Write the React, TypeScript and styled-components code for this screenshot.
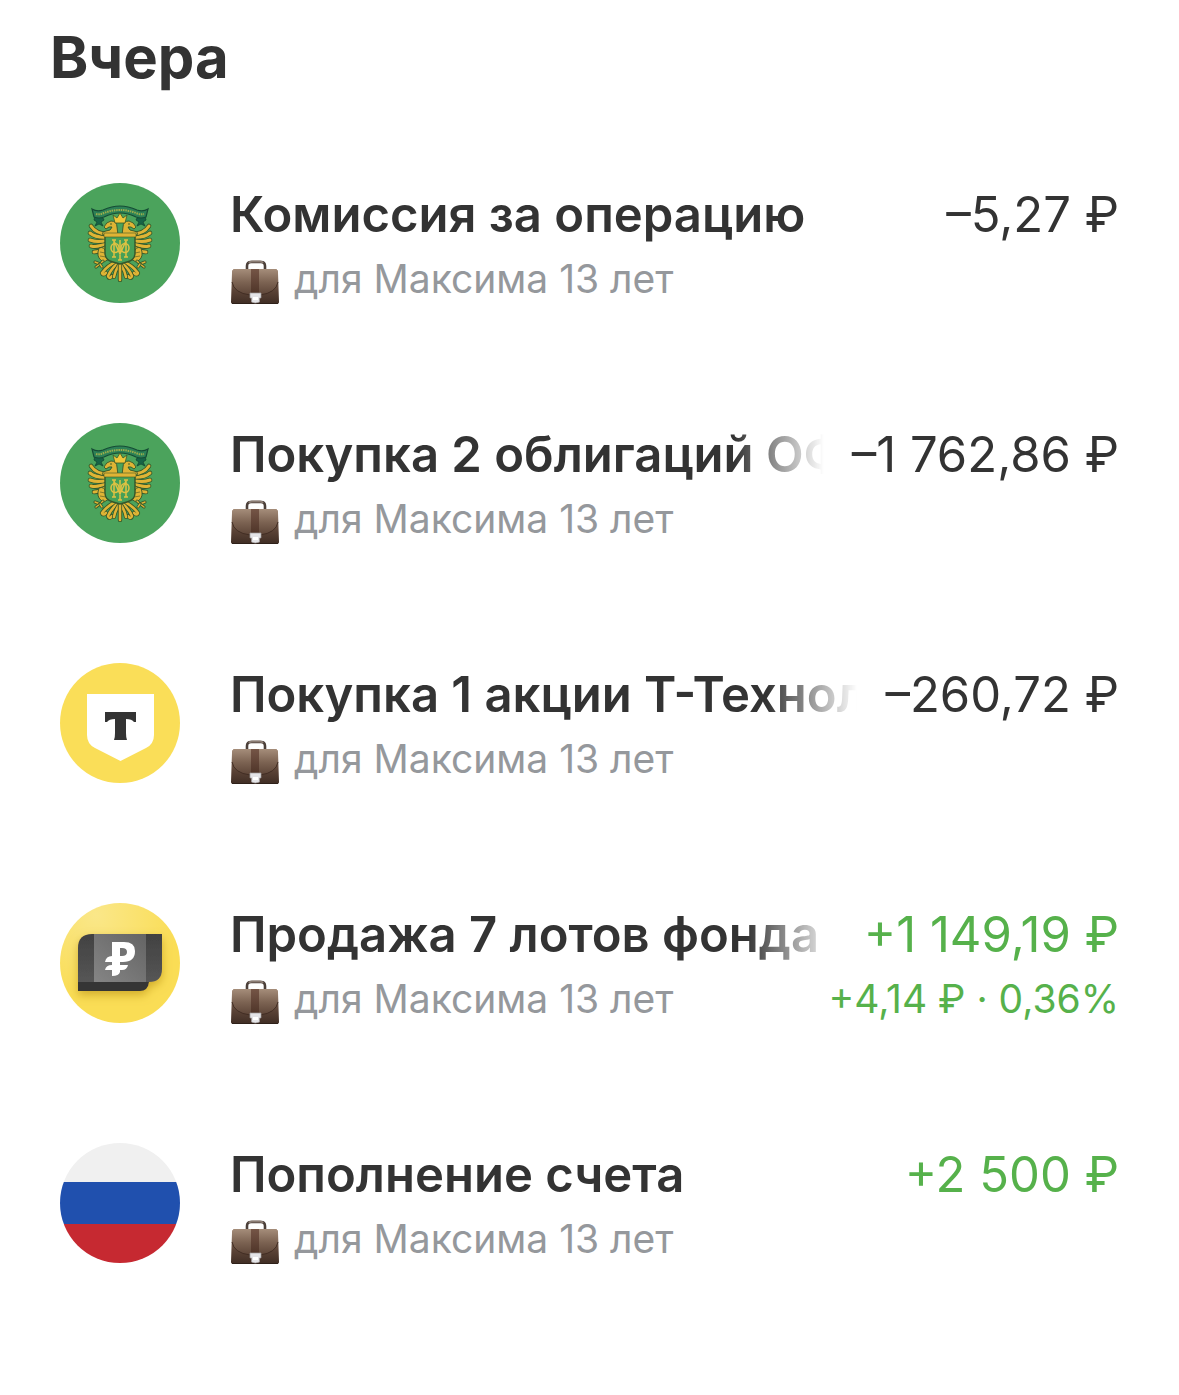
import React, { useId } from 'react';
import styled, { createGlobalStyle } from 'styled-components';

const GlobalStyle = createGlobalStyle`
  * { box-sizing: border-box; }
  body {
    margin: 0;
    background: #fff;
    color: #333;
    font-family: Inter, "Liberation Sans", sans-serif;
  }
`;

const Page = styled.main`
  padding: 23px 60px 60px;
`;

const DayTitle = styled.h1`
  margin: 0 0 32px -10px;
  font-size: 58px;
  line-height: 68px;
  font-weight: 700;
`;

const List = styled.ul`
  display: flex;
  flex-direction: column;
  margin: 0;
  padding: 0;
  list-style: none;
`;

const Row = styled.li`
  display: flex;
  align-items: center;
  gap: 50px;
  min-height: 240px;
`;

const Badge = styled.svg`
  display: block;
  flex: none;
  width: 120px;
  height: 120px;
`;

const Details = styled.div`
  flex: 1;
  min-width: 0;
  padding-top: 8px;
`;

const Line = styled.div`
  display: flex;
  align-items: center;
  justify-content: space-between;
  gap: 28px;
`;

const Title = styled.h2<{ $fade?: boolean }>`
  flex: 1 1 0;
  min-width: 0;
  margin: 0;
  overflow: hidden;
  white-space: nowrap;
  font-size: 49px;
  line-height: 64px;
  font-weight: 600;
  ${({ $fade }) => $fade && 'mask-image: linear-gradient(to left, transparent, #000 90px);'}
`;

const Amount = styled.span<{ $income?: boolean }>`
  flex: none;
  white-space: nowrap;
  font-size: 49px;
  line-height: 64px;
  color: ${({ $income }) => ($income ? '#56b14b' : '#333')};
`;

const Account = styled.span`
  display: flex;
  align-items: center;
  gap: 14px;
  font-size: 39px;
  line-height: 64px;
  color: #95989c;
`;

const Profit = styled.span`
  font-size: 39px;
  line-height: 64px;
  color: #56b14b;
`;

const CaseIcon = styled.svg`
  display: block;
  width: 50px;
  height: 46px;
  margin-top: 8px;
`;

function Briefcase() {
  const id = useId();
  return (
    <CaseIcon viewBox="0 0 50 46" aria-hidden="true">
      <defs>
        <linearGradient id={id + 'b'} x1="0" y1="0" x2="0" y2="1">
          <stop offset="0" stopColor="#9a7d69" />
          <stop offset="0.6" stopColor="#5c4437" />
          <stop offset="1" stopColor="#3f2d24" />
        </linearGradient>
        <linearGradient id={id + 'f'} x1="0" y1="0" x2="0" y2="1">
          <stop offset="0" stopColor="#a58d7a" />
          <stop offset="0.5" stopColor="#7d6453" />
          <stop offset="1" stopColor="#5c4437" />
        </linearGradient>
        <linearGradient id={id + 's'} x1="0" y1="0" x2="0" y2="1">
          <stop offset="0" stopColor="#755546" />
          <stop offset="1" stopColor="#4e3428" />
        </linearGradient>
      </defs>
      <path d="M17 9V6Q17 2 21 2H31Q35 2 35 6V9" fill="none" stroke="#4b3f39" strokeWidth="2.6" />
      <path d="M19 3Q20 1.500 22 1.500H30Q32 1.500 33 3" fill="none" stroke="#8b7d74" strokeWidth="2" />
      <path d="M5 9H45Q48 9 48 13L49 42Q49 44 46 44H4Q1 44 1 42L2 13Q2 9 5 9Z" fill={'url(#' + id + 'b)'} />
      <path d="M5 9H45Q48 9 48 13V22Q46 33 30 35H20Q4 33 2 22V13Q2 9 5 9Z" fill={'url(#' + id + 'f)'} />
      <path d="M2 22Q4 33 20 35H30Q46 33 48 22" fill="none" stroke="#412d23" strokeWidth="1" />
      <path d="M21 9H29V34H21Z" fill={'url(#' + id + 's)'} />
      <path d="M2 43.500H48" stroke="#2e2019" strokeWidth="1.2" />
      <path d="M20 33H31V38H29.500V42Q25 44 21.500 42V38H20Z" fill="#e4e4e7" stroke="#9f9b9b" strokeWidth="0.7" />
      <path d="M23 37H28V40H23Z" fill="#fff" />
    </CaseIcon>
  );
}

const feathers = [
  'M46 63Q40 69 34 69',
  'M46 60Q38 65 31 63',
  'M47 57Q38 60 30 57',
  'M47 54Q36 55 30 50',
  'M48 51Q36 51 31 43',
];

const plumes = ['M56 79Q48 82 42 90Q43 93 46 90', 'M57 81Q51 86 48 93Q49 97 52 93', 'M59 82Q55 88 54 94', 'M60 80V97'];

function Strands({ paths, width }: { paths: string[]; width: number }) {
  return (
    <g fill="none" strokeLinecap="round" strokeLinejoin="round">
      {paths.map((d) => (
        <g key={d}>
          <path d={d} stroke="#34562a" strokeWidth={width + 1.6} />
          <path d={d} stroke="#dfb435" strokeWidth={width} />
        </g>
      ))}
    </g>
  );
}

function EagleHalf() {
  return (
    <g>
      <path d="M35 33L43 35L44 37L41 39L43 43L39 41L35 43L37 39L34 37Z" fill="#176447" stroke="#124831" strokeWidth="0.8" />
      <Strands paths={feathers} width={3} />
      <path d="M58 52H43Q41 49 46 48Q51 48 52 44Q49 43 46 46L44 44Q46 39 51 38Q57 38 57 44Z" fill="#dfb435" stroke="#34562a" strokeWidth="0.9" />
      <circle cx="51" cy="41" r="0.8" fill="#34562a" />
      <path d="M39 65Q44 63 46 69L49 76L44 79Q37 76 38 69Z" fill="#dfb435" stroke="#34562a" strokeWidth="0.9" />
      <path d="M40 69L45 70M40 73L46 74" stroke="#6d6d28" strokeWidth="0.8" />
      <Strands paths={['M43 78L40 81', 'M40 81L35 79', 'M40 81L36 84', 'M40 81L42 84']} width={1.4} />
      <Strands paths={plumes} width={2.6} />
    </g>
  );
}

function EagleBadge() {
  return (
    <Badge viewBox="0 0 120 120" role="img" aria-label="ОФЗ">
      <circle cx="60" cy="60" r="60" fill="#4ba35c" />
      <EagleHalf />
      <g transform="translate(120 0) scale(-1 1)"><EagleHalf /></g>
      <path d="M32 26Q37 29 43 27Q52 23 60 23Q68 23 77 27Q83 29 88 26L86 34Q81 36 76 34Q68 30 60 30Q52 30 44 34Q39 36 34 34Z" fill="#2d8156" stroke="#164c35" strokeWidth="1.2" />
      <path d="M36 31Q40 32 44 30Q52 27 60 27Q68 27 76 30Q80 32 84 31" fill="none" stroke="#9cae4b" strokeWidth="2" strokeDasharray="1.500 0.800" />
      <path d="M55 40L53 32L57 35L60 30L63 35L67 32L65 40Z" fill="#efc63a" stroke="#3d5926" strokeWidth="0.8" />
      <path d="M45 52H75V70Q75 77 67 79L60 81L53 79Q45 77 45 70Z" fill="#46a057" stroke="#34562a" strokeWidth="1.4" />
      <path d="M44 50H76V54H44Z" fill="#dfb435" stroke="#425a25" strokeWidth="0.6" />
      <g fill="none" stroke="#dfc243" strokeWidth="1.5">
        <path d="M54 57V74M66 57V74M54 58L60 71L66 58M60 57V77M52 57H56M64 57H68M52 74H56M64 74H68M58 77H62" />
        <ellipse cx="55" cy="65" rx="4" ry="4.500" />
        <ellipse cx="65" cy="65" rx="4" ry="4.500" />
      </g>
    </Badge>
  );
}

function BankBadge() {
  return (
    <Badge viewBox="0 0 120 120" role="img" aria-label="Т-Технологии">
      <circle cx="60" cy="60" r="60" fill="#fade58" />
      <path d="M27 31H94V72Q94 81 86 85L60.500 98L35 85Q27 81 27 72Z" fill="#fff" />
      <path d="M45 49H76V59H74Q72 56 66 56V70Q66 75 67 77H54Q55 75 55 70V56Q49 56 47 59H45Z" fill="#333" />
    </Badge>
  );
}

function FundBadge() {
  return (
    <Badge viewBox="0 0 120 120" role="img" aria-label="Фонд">
      <defs>
        <radialGradient id="fundGold" cx="0.3" cy="0.1" r="0.7">
          <stop offset="0" stopColor="#fae789" />
          <stop offset="1" stopColor="#fadd55" />
        </radialGradient>
        <linearGradient id="fundFace" x1="1" y1="0" x2="0" y2="1">
          <stop offset="0" stopColor="#646464" />
          <stop offset="1" stopColor="#858585" />
        </linearGradient>
        <linearGradient id="fundSide" x1="0" y1="0" x2="0" y2="1">
          <stop offset="0" stopColor="#414141" />
          <stop offset="1" stopColor="#565656" />
        </linearGradient>
        <filter id="fundShade" x="-20%" y="-20%" width="140%" height="150%">
          <feDropShadow dx="0" dy="4" stdDeviation="5" floodColor="#a87c00" floodOpacity="0.5" />
        </filter>
      </defs>
      <circle cx="60" cy="60" r="60" fill="url(#fundGold)" />
      <g filter="url(#fundShade)">
        <path d="M18 70H89V79Q88 88 80 88H18Z" fill="#363636" />
        <path d="M32 31H102V66Q102 79 89 79H18V45Q18 31 32 31Z" fill="url(#fundSide)" />
      </g>
      <path d="M34 31H86V79H34Z" fill="url(#fundFace)" />
      <path d="M52 39H64Q75 39 75 48Q75 59 63 59H60V62H68Q67 67 62 67H60V69Q59 73 52 73V67H45Q46 62 52 62V59H45Q46 53 52 53Z" fill="#fff" />
      <path d="M60 45V53H62Q67 53 67 49Q67 45 62 45Z" fill="#737373" />
    </Badge>
  );
}

function FlagBadge() {
  return (
    <Badge viewBox="0 0 120 120" role="img" aria-label="Рубли">
      <clipPath id="flagDisc"><circle cx="60" cy="60" r="60" /></clipPath>
      <g clipPath="url(#flagDisc)">
        <path d="M0 0H120V40H0Z" fill="#f0f0f0" />
        <path d="M0 39H120V81H0Z" fill="#2050ae" />
        <path d="M0 81H120V120H0Z" fill="#c62931" />
      </g>
    </Badge>
  );
}

interface Operation {
  badge: React.ReactNode;
  title: string;
  amount: string;
  fade?: boolean;
  income?: boolean;
  profit?: string;
}

const operations: Operation[] = [
  { badge: <EagleBadge />, title: 'Комиссия за операцию', amount: '–5,27 ₽' },
  { badge: <EagleBadge />, title: 'Покупка 2 облигаций ОФ', amount: '–1 762,86 ₽', fade: true },
  { badge: <BankBadge />, title: 'Покупка 1 акции Т-Технол', amount: '–260,72 ₽', fade: true },
  { badge: <FundBadge />, title: 'Продажа 7 лотов фонда', amount: '+1 149,19 ₽', fade: true, income: true, profit: '+4,14 ₽ · 0,36%' },
  { badge: <FlagBadge />, title: 'Пополнение счета', amount: '+2 500 ₽', income: true },
];

export default function App() {
  return (
    <>
      <GlobalStyle />
      <Page>
        <DayTitle>Вчера</DayTitle>
        <List>
          {operations.map((op) => (
            <Row key={op.title}>
              {op.badge}
              <Details>
                <Line>
                  <Title $fade={op.fade}>{op.title}</Title>
                  <Amount $income={op.income}>{op.amount}</Amount>
                </Line>
                <Line>
                  <Account><Briefcase />для Максима 13 лет</Account>
                  {op.profit && <Profit>{op.profit}</Profit>}
                </Line>
              </Details>
            </Row>
          ))}
        </List>
      </Page>
    </>
  );
}
